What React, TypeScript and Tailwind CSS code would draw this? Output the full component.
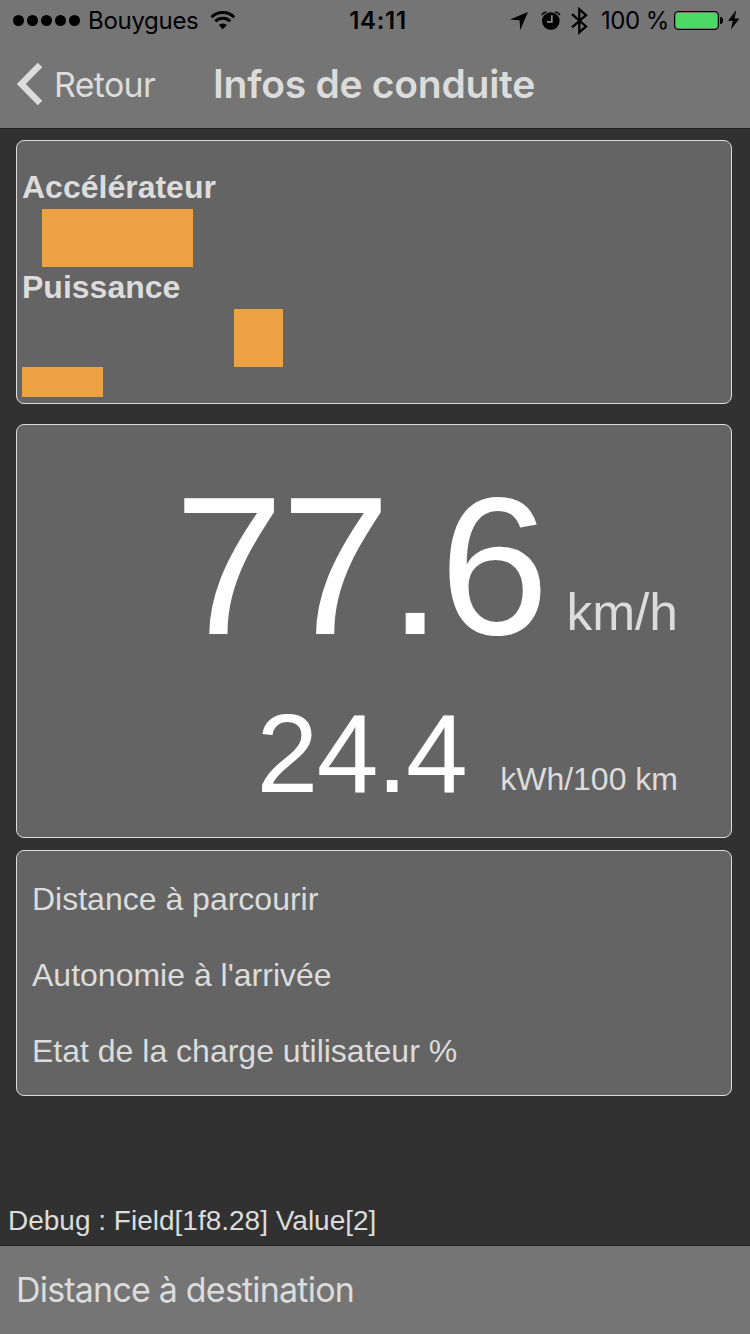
import React from "react";

interface ReadingProps {
  value: string;
  unit: string;
  rowClass: string;
  valueClass: string;
  unitClass: string;
}

const routeLabels = [
  "Distance à parcourir",
  "Autonomie à l'arrivée",
  "Etat de la charge utilisateur %",
];

const WifiIcon: React.FC = () => (
  <svg width="26" height="20" viewBox="0 0 26 20" className="block">
    <g fill="none" stroke="#000" strokeWidth="3">
      <path d="M1.4 7.2A16.3 16.3 0 0 1 24.2 7.2" />
      <path d="M5.3 11.3A10.7 10.7 0 0 1 20.3 11.3" />
    </g>
    <path d="M12.8 19.2L8.7 15.1A5.8 5.8 0 0 1 16.9 15.1Z" />
  </svg>
);

const LocationIcon: React.FC = () => (
  <svg width="18" height="18" viewBox="0 0 18 18" className="block">
    <path d="M18 0L10.2 18L9.6 8.2L0 7.6Z" />
  </svg>
);

const AlarmIcon: React.FC = () => (
  <svg width="20" height="19" viewBox="0 0 20 19" className="block">
    <circle cx="9.8" cy="10" r="8.8" />
    <path
      d="M0.8 4.1Q2 1.3 5.4 0.9M18.8 4.1Q17.6 1.3 14.2 0.9"
      fill="none"
      stroke="#000"
      strokeWidth="1.5"
    />
    <path d="M10.8 4.2V10.8H6" fill="none" stroke="#8a8a8a" strokeWidth="1.8" />
  </svg>
);

const BluetoothIcon: React.FC = () => (
  <svg width="18" height="28" viewBox="0 0 18 28" className="block">
    <path
      d="M1 7.2L15 19.4L8.3 25.4V2.2L15 8.2L1 20.4"
      fill="none"
      stroke="#000"
      strokeWidth="2.3"
    />
  </svg>
);

const Battery: React.FC = () => (
  <div className="flex items-center">
    <div className="h-[19px] w-[45px] rounded-[4px] border border-black p-px">
      <div className="h-full w-full rounded-[2px] bg-[#4cd964]" />
    </div>
    <div className="ml-px h-[7px] w-[3px] rounded-r-full bg-black" />
  </div>
);

const StatusBar: React.FC = () => (
  <div className="flex h-10 items-center font-['Inter'] text-[24px] leading-[40px] text-black">
    <div className="ml-[13px] flex gap-[3px]">
      {[0, 1, 2, 3, 4].map((dot) => (
        <div key={dot} className="h-[11px] w-[11px] rounded-full bg-black" />
      ))}
    </div>
    <span className="ml-[8px] mt-[2px] w-[110px] whitespace-nowrap tracking-[-0.3px]">
      Bouygues
    </span>
    <div className="ml-[12px]">
      <WifiIcon />
    </div>
    <span className="ml-[112px] mt-[2px] w-[60px] whitespace-nowrap text-center font-semibold tracking-[0.7px]">
      14:11
    </span>
    <div className="ml-[102px] mt-[2px]">
      <LocationIcon />
    </div>
    <div className="ml-[13px]">
      <AlarmIcon />
    </div>
    <div className="ml-[10px] mt-[2px]">
      <BluetoothIcon />
    </div>
    <span className="ml-[12px] mt-[2px] w-[67px] whitespace-nowrap tracking-[-0.5px]">
      100 %
    </span>
    <div className="ml-[6px]">
      <Battery />
    </div>
    <svg width="12" height="20" viewBox="0 0 12 20" className="ml-[5px] block">
      <path d="M8.3 0L0 10.8H4.8L3 19.4L11.4 8.4H6.6Z" />
    </svg>
  </div>
);

const NavBar: React.FC = () => (
  <div className="flex h-[88px] items-center font-['Inter'] text-[#dcdcdc]">
    <svg width="27" height="44" viewBox="0 0 27 44" className="ml-4 block">
      <path
        d="M24 3L5.3 22L24 41"
        fill="none"
        stroke="#dcdcdc"
        strokeWidth="6.4"
      />
    </svg>
    <span className="ml-[11px] mt-[2px] w-[102px] whitespace-nowrap text-[34px] leading-[88px] tracking-[-0.7px]">
      Retour
    </span>
    <h1 className="ml-[57px] whitespace-nowrap text-[39px] font-semibold leading-[88px] tracking-[-0.25px]">
      Infos de conduite
    </h1>
  </div>
);

const Card: React.FC<{ className: string; children: React.ReactNode }> = ({
  className,
  children,
}) => (
  <section
    className={`mx-4 w-[716px] rounded-lg border border-[#dcdcdc] bg-[#646464] ${className}`}
  >
    {children}
  </section>
);

const Reading: React.FC<ReadingProps> = ({
  value,
  unit,
  rowClass,
  valueClass,
  unitClass,
}) => (
  <div className={`flex items-start justify-end pr-[53px] ${rowClass}`}>
    <span className={`text-white ${valueClass}`}>{value}</span>
    <span className={`whitespace-nowrap ${unitClass}`}>{unit}</span>
  </div>
);

const App: React.FC = () => {
  return (
    <div className="flex h-[1334px] w-[750px] flex-col overflow-hidden bg-[#313131] font-['Liberation_Sans',sans-serif] text-[#dcdcdc]">
      <header className="h-[129px] border-b border-[#222222] bg-[#757575]">
        <StatusBar />
        <NavBar />
      </header>

      <Card className="mt-[11px] h-[264px] px-[5px] pt-[26px]">
        <h2 className="mb-[2px] text-[32px] font-bold leading-[40px]">
          Accélérateur
        </h2>
        <div className="ml-5 h-[58px] w-[151px] bg-[#eca242]" />
        <h2 className="mb-[2px] text-[32px] font-bold leading-[40px]">
          Puissance
        </h2>
        <div className="ml-[212px] h-[58px] w-[49px] bg-[#eca242]" />
        <div className="h-[30px] w-[81px] bg-[#eca242]" />
      </Card>

      <Card className="mt-5 h-[414px]">
        <Reading
          value="77.6"
          unit="km/h"
          rowClass="pt-[45px]"
          valueClass="text-[197px] leading-[192px] tracking-[-2.8px]"
          unitClass="ml-[20px] mt-[116px] text-[51.5px] leading-[52px]"
        />
        <Reading
          value="24.4"
          unit="kWh/100 km"
          rowClass="pt-[38px]"
          valueClass="text-[111px] leading-[108px] tracking-[-1.6px]"
          unitClass="ml-[34px] mt-[63px] text-[32px] leading-[32px]"
        />
      </Card>

      <Card className="mt-3 h-[246px] pl-[15px] pt-[10px]">
        {routeLabels.map((label) => (
          <p key={label} className="text-[32px] leading-[76px]">
            {label}
          </p>
        ))}
      </Card>

      <p className="mt-auto pl-2 text-[28px] leading-[48px]">
        Debug : Field[1f8.28] Value[2]
      </p>

      <footer className="h-[89px] border-t border-[#222222] bg-[#757575] pl-4 font-['Inter'] text-[34px] leading-[88px] tracking-[-0.8px]">
        Distance à destination
      </footer>
    </div>
  );
};

export default App;
